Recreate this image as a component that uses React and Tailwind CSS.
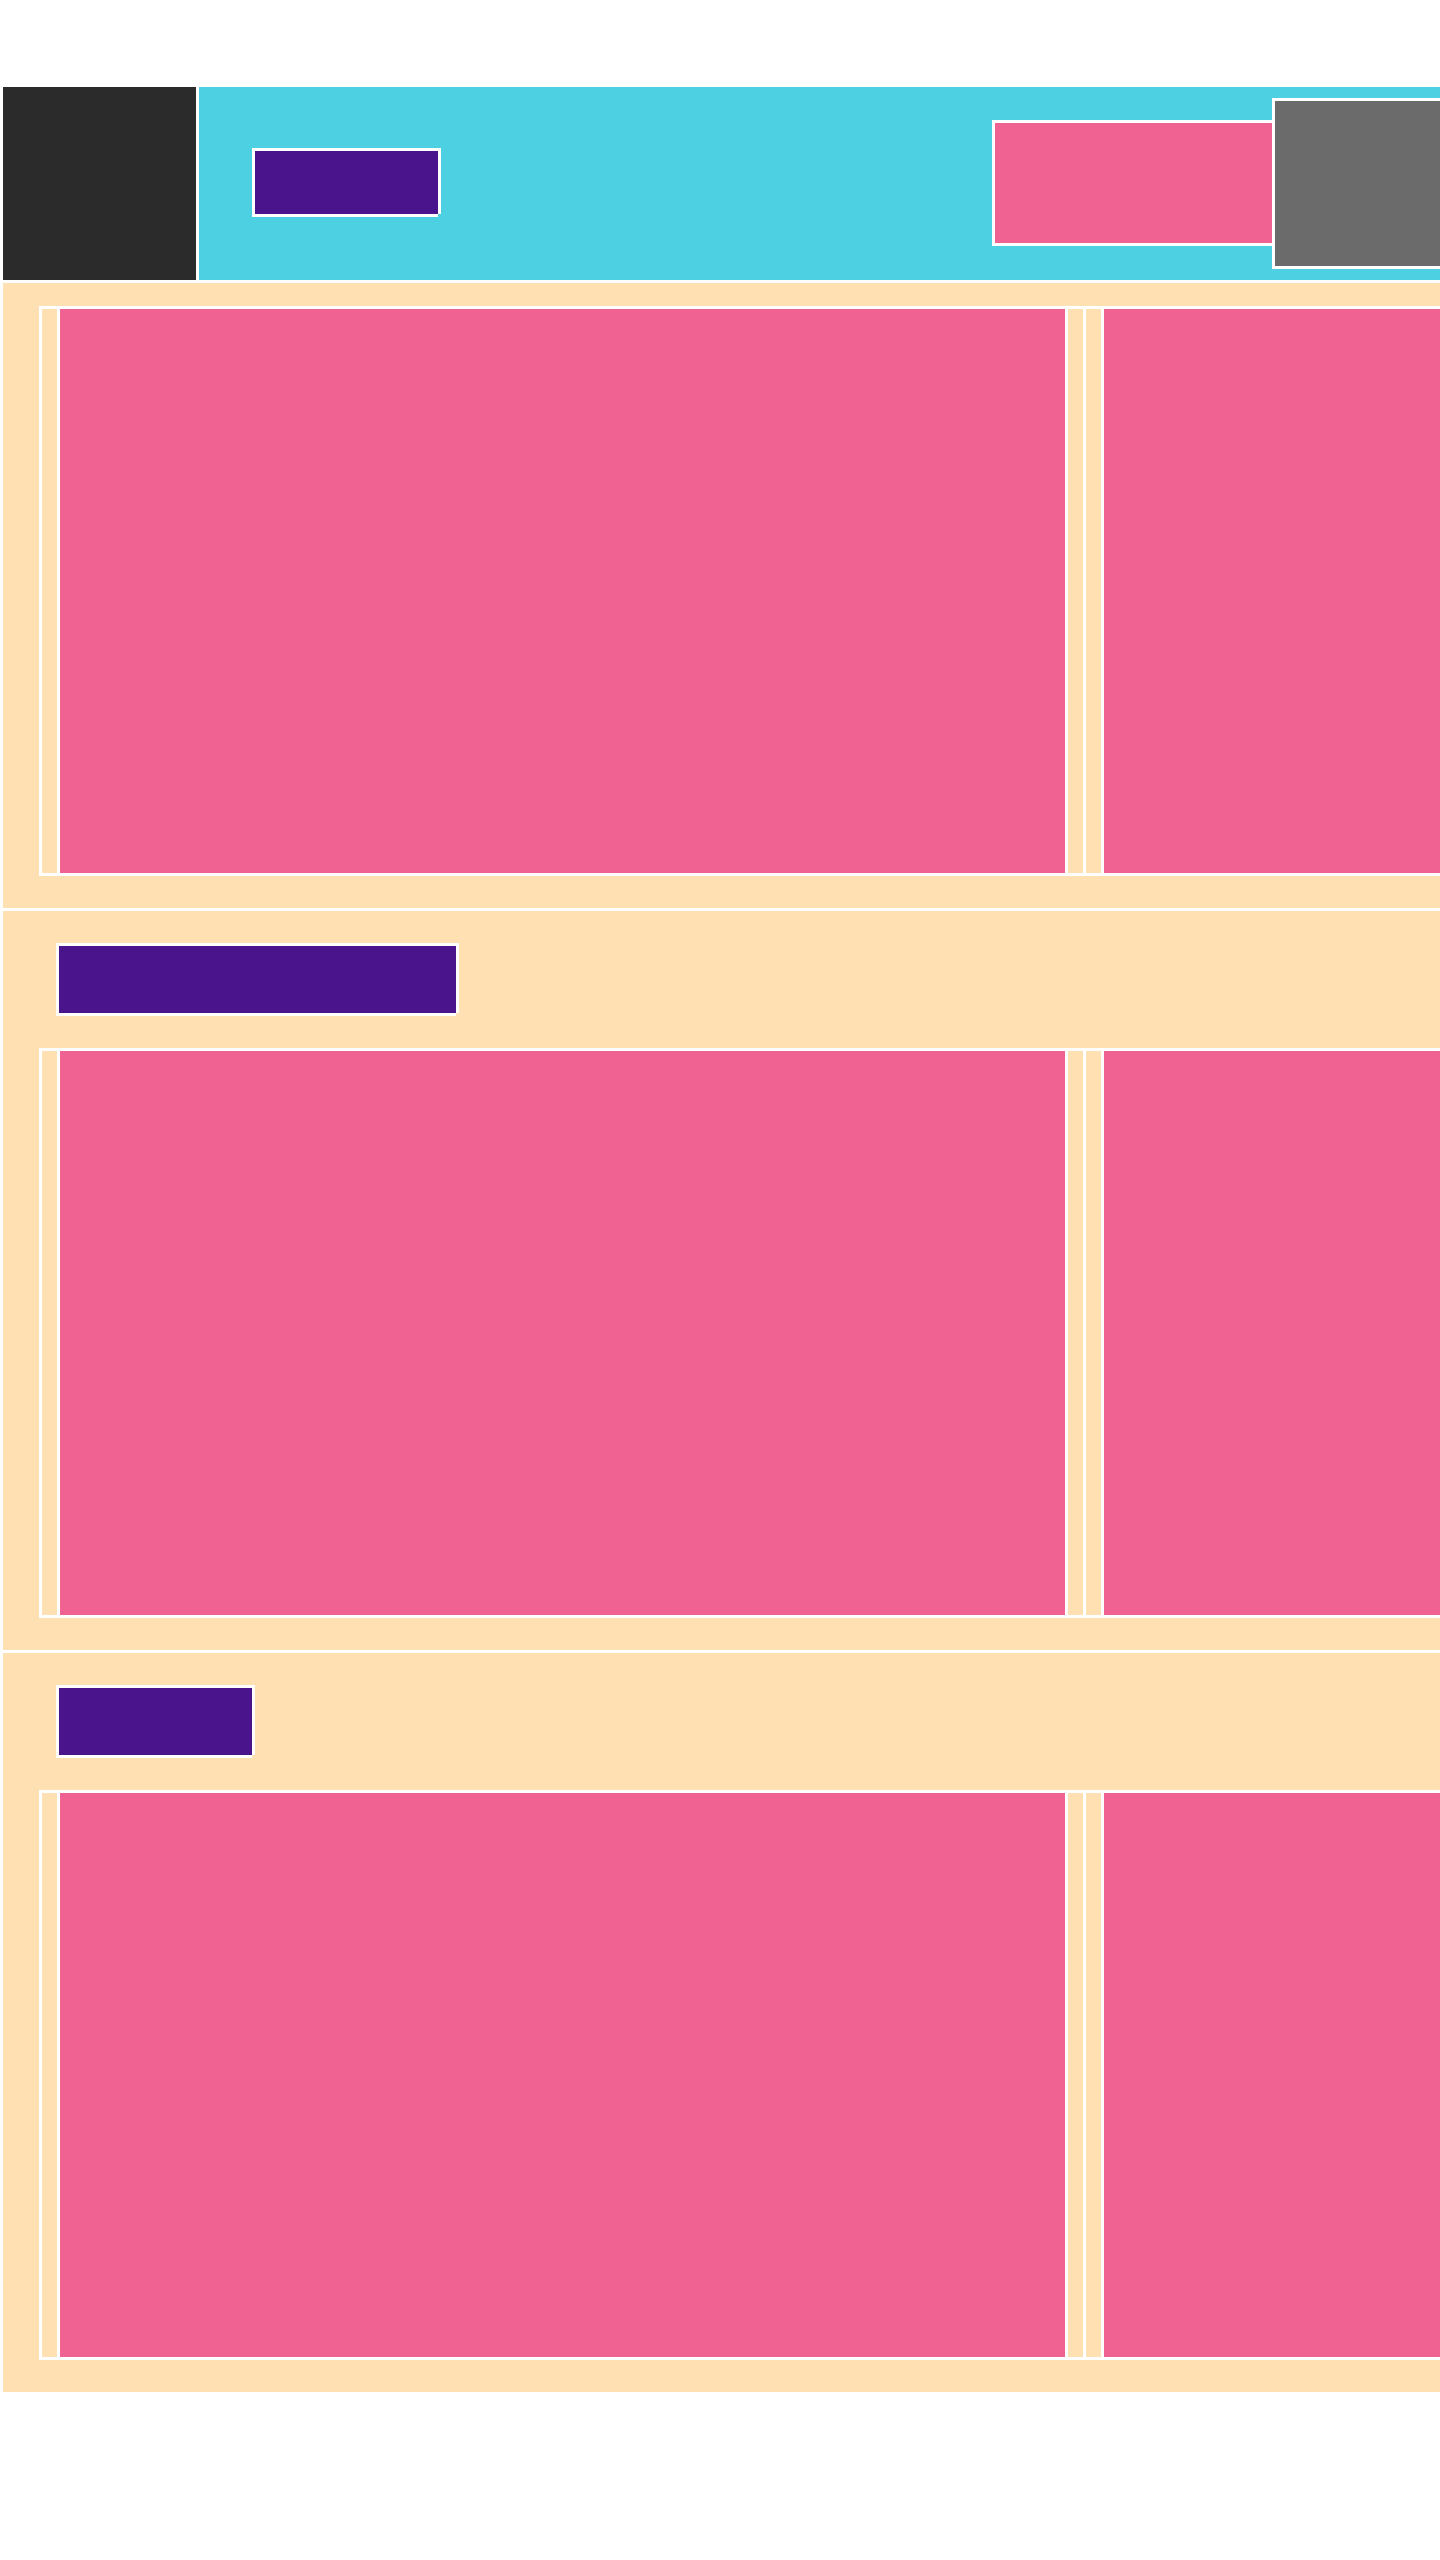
const edge = 'border-l-[3px] border-t-[3px] border-white shadow-[3px_0_0_0_#fff,0_3px_0_0_#fff]';

const Slide = () => (
  <>
    <div className="w-[15px] flex-none bg-[#ffe0b2]" />
    <div className="w-[1005px] flex-none bg-[#f06292]" />
    <div className="w-[15px] flex-none bg-[#ffe0b2]" />
  </>
);

const Carousel = () => (
  <div className="flex h-[570px] w-max gap-[3px] bg-white p-[3px]">
    <Slide />
    <Slide />
  </div>
);

const Section = ({ title, first }) => (
  <section className={`bg-[#ffe0b2] pb-[32px] pl-[36px] ${first ? 'pt-[23px]' : 'pt-[32px]'}`}>
    {title && (
      <div className="mb-[35px] ml-[17px] flex">
        <div className={`h-[70px] bg-[#4a148c] ${edge} ${title}`} />
      </div>
    )}
    <Carousel />
  </section>
);

export default function App() {
  return (
    <div className="w-[1440px] overflow-hidden bg-white pb-[168px] pt-[84px]">
      <div className="flex flex-col gap-[3px] bg-white pl-[3px] pt-[3px]">
        <header className="flex h-[193px] gap-[3px]">
          <div className="w-[193px] flex-none bg-[#2b2b2b]" />
          <div className="flex flex-1 items-start bg-[#4dd0e1] pl-[53px]">
            <div className={`mt-[61px] h-[66px] w-[186px] flex-none bg-[#4a148c] ${edge}`} />
            <div className={`ml-auto mt-[33px] h-[123px] w-[280px] flex-none bg-[#f06292] ${edge}`} />
            <div className={`mt-[11px] h-[168px] w-[168px] flex-none bg-[#6b6b6b] ${edge}`} />
          </div>
        </header>
        <Section first />
        <Section title="w-[400px]" />
        <Section title="w-[196px]" />
      </div>
    </div>
  );
}
